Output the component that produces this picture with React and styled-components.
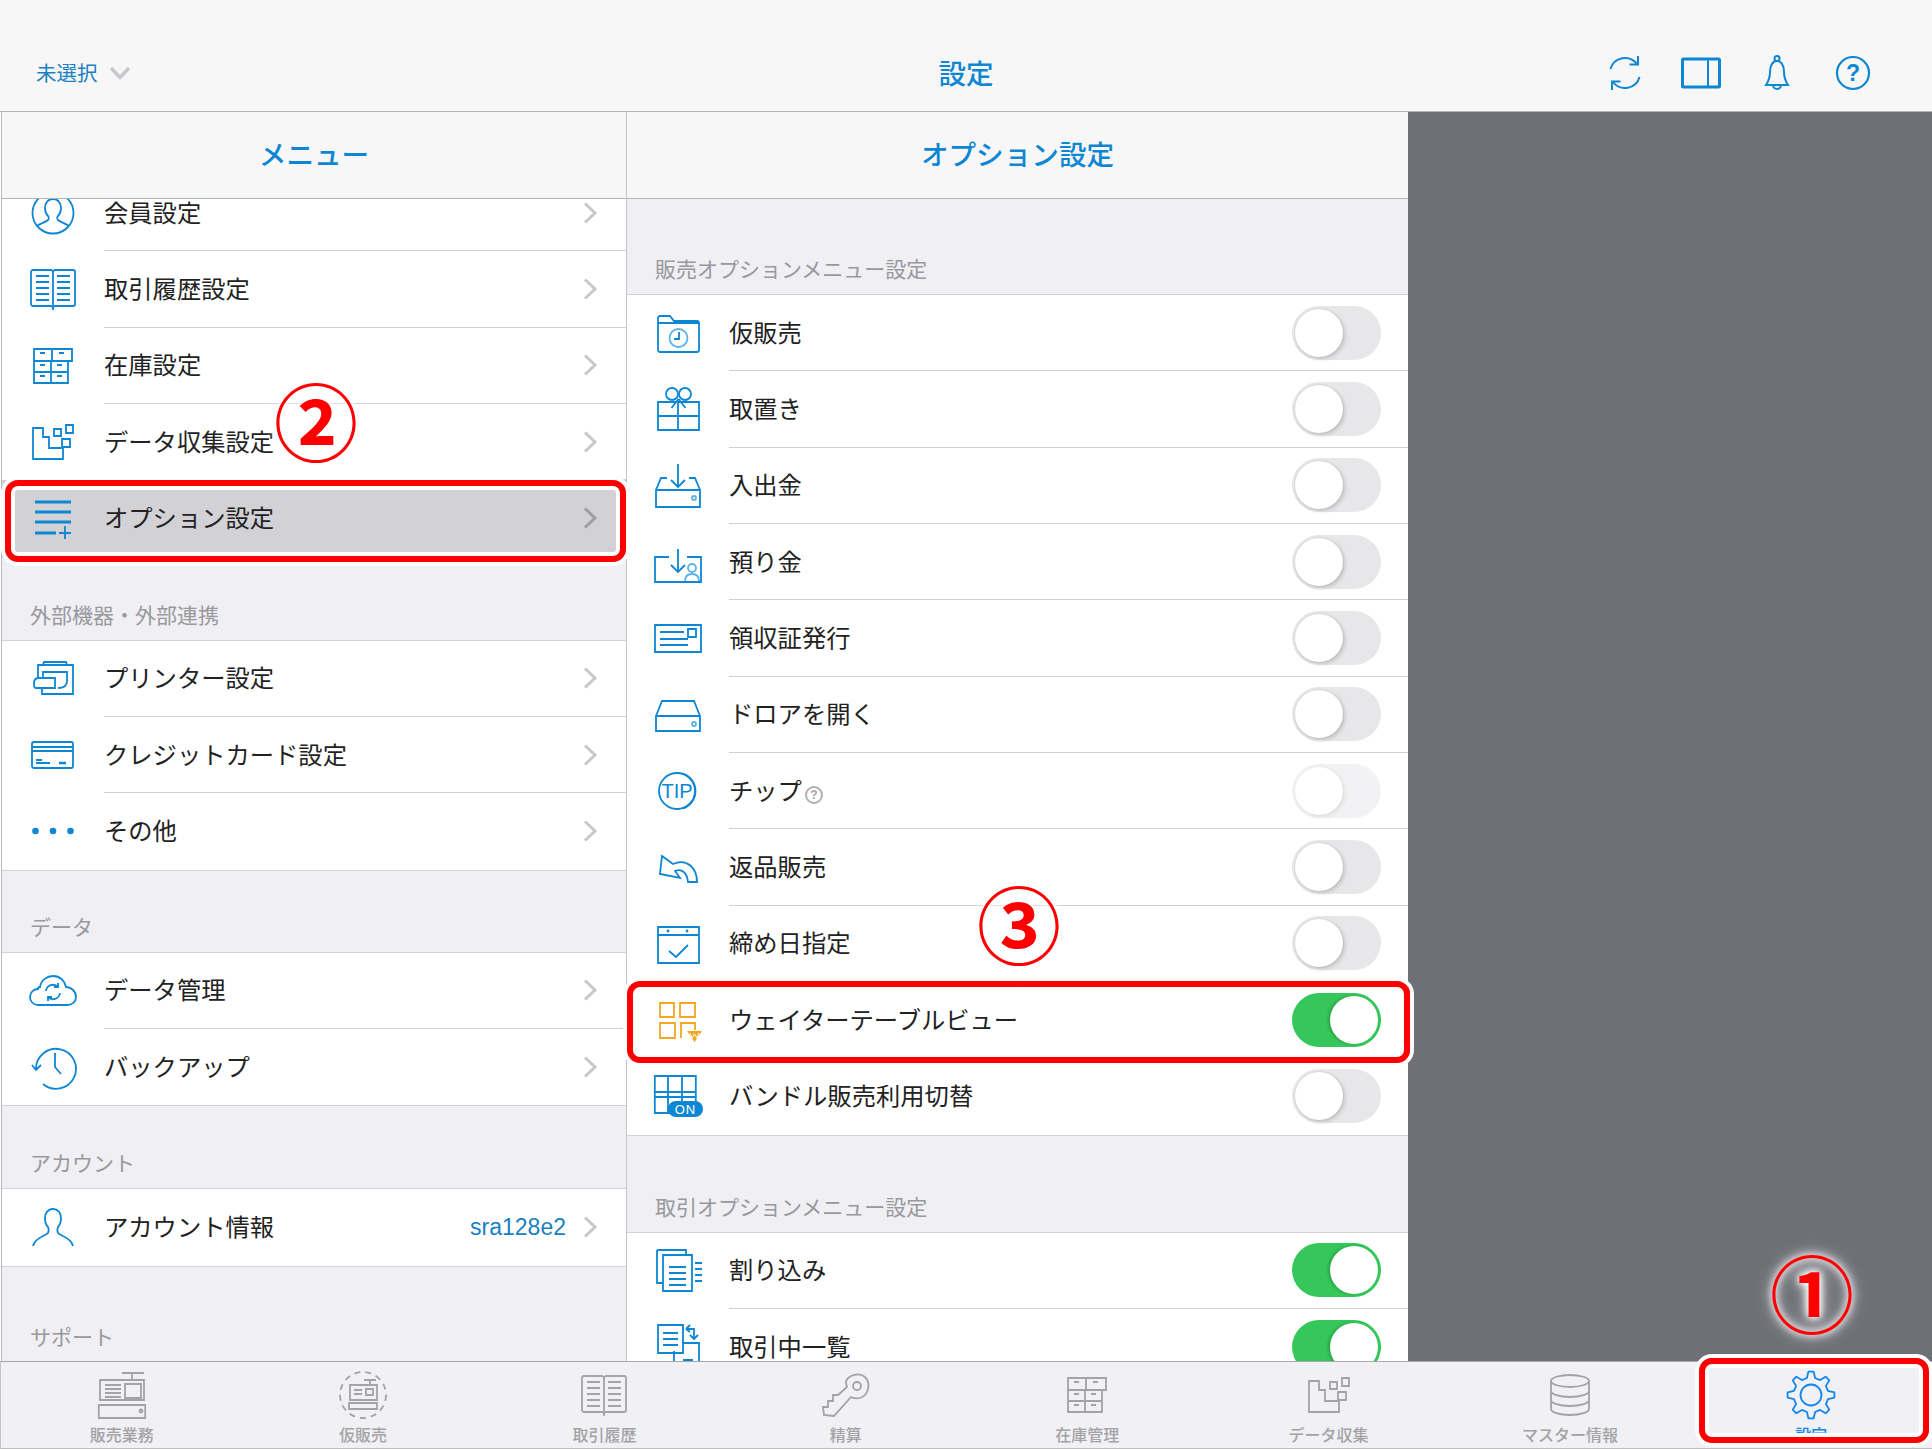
import React from 'react'
import styled, { createGlobalStyle } from 'styled-components'

const BLUE = '#0d86d3'
const JP = `"Noto Sans CJK JP", "Noto Sans", sans-serif`

const GlobalStyle = createGlobalStyle`
  html, body { margin: 0; padding: 0; background: #fff; }
  body { font-family: ${JP}; }
  * { box-sizing: border-box; }
`

const Page = styled.div`
  position: relative;
  width: 1932px;
  height: 1449px;
  overflow: hidden;
  display: grid;
  grid-template-rows: 112px 1fr 88px;
  background: #fff;
`

const TopBar = styled.header`
  display: grid;
  grid-template-columns: 1fr auto 1fr;
  align-items: center;
  padding: 34px 36px 0 36px;
  background: #f7f7f7;
  border-bottom: 1px solid #b4b4b4;
`

const ShopPicker = styled.div`
  display: flex;
  align-items: center;
  gap: 11px;
  color: #1a80c4;
  font-size: 20.5px;
  line-height: 1.2;
`

const BarTitle = styled.h1`
  margin: 0;
  color: ${BLUE};
  font-size: 27.5px;
  font-weight: 500;
  line-height: 1.2;
`

const BarActions = styled.div`
  display: flex;
  justify-content: flex-end;
  margin-right: 5px;
`

const BarAction = styled.span`
  width: 76px;
  height: 48px;
  display: flex;
  align-items: center;
  justify-content: center;
  color: ${BLUE};
`

const Split = styled.main`
  display: grid;
  grid-template-columns: 626px 781px 1fr;
  padding-left: 1px;
  min-height: 0;
  background: #fff;
`

const Pane = styled.section`
  display: flex;
  flex-direction: column;
  min-height: 0;
  background: #efeff4;
  border-left: ${p => (p.$bordered ? '1px solid #b9b9b9' : 'none')};
  border-right: ${p => (p.$bordered ? '1px solid #c4c4c4' : 'none')};
`

const EmptyDetail = styled.div`
  background: #6f6f78;
`

const PaneHeader = styled.div`
  flex: 0 0 87px;
  display: flex;
  align-items: center;
  justify-content: center;
  padding-bottom: 4px;
  background: #f7f7f7;
  border-bottom: 1px solid #b4b4b4;
  color: ${BLUE};
  font-size: 27.6px;
  font-weight: 500;
`

const Scroller = styled.div`
  flex: 1;
  min-height: 0;
  overflow: hidden;
`

const ScrollContent = styled.div`
  margin-top: ${p => p.$offset || 0}px;
`

const SectionHead = styled.div`
  height: ${p => p.$height}px;
  display: flex;
  align-items: flex-end;
  padding: 0 0 13px 28px;
  color: #98989d;
  font-size: 21px;
  line-height: 26px;
`

const List = styled.div`
  background: #fff;
  border-top: ${p => (p.$flush ? 'none' : '1px solid #d2d2d6')};
  border-bottom: 1px solid #d2d2d6;
`

const RowBody = styled.div`
  flex: 1;
  height: 100%;
  min-width: 0;
  display: flex;
  align-items: center;
  border-bottom: 1px solid #d0d0d4;
  padding-right: ${p => (p.$toggle ? 27 : 29)}px;
  color: #222;
  font-size: 24.3px;
  line-height: 1.2;
`

const Row = styled.div`
  height: 76.33px;
  display: flex;
  align-items: center;
  background: ${p => (p.$selected ? '#d1d1d6' : 'transparent')};
  &:last-child ${RowBody} {
    border-bottom: none;
  }
`

const IconSlot = styled.span`
  flex: 0 0 102px;
  height: 48px;
  display: flex;
  justify-content: center;
  color: ${p => p.$color || BLUE};
`

const Label = styled.span`
  flex: 1;
  display: flex;
  align-items: center;
  padding-bottom: 3px;
`

const HelpDot = styled.span`
  width: 18px;
  height: 18px;
  margin: 12px 0 0 3px;
  display: inline-flex;
  align-items: center;
  justify-content: center;
  border: 2px solid #b0b0b0;
  border-radius: 50%;
  color: #a4a4a4;
  font: 700 12px "Liberation Sans", sans-serif;
`

const Value = styled.span`
  margin-right: 17px;
  color: #1a7fc1;
  font: 23px "Liberation Sans", sans-serif;
`

const Track = styled.span`
  width: 89px;
  height: 54px;
  padding: 3px;
  display: flex;
  justify-content: ${p => (p.$on ? 'flex-end' : 'flex-start')};
  border-radius: 27px;
  background: ${p => (p.$on ? '#35c759' : '#e7e7ea')};
  opacity: ${p => (p.$disabled ? 0.5 : 1)};
`

const Knob = styled.span`
  width: 48px;
  height: 48px;
  border-radius: 50%;
  background: #fff;
  box-shadow: ${p =>
    p.$on ? '-2px 0 3px rgba(0,60,20,.25)' : '2px 2px 4px rgba(0,0,0,.16), 0 0 0 1px rgba(0,0,0,.05)'};
`

const TabBar = styled.nav`
  display: grid;
  grid-template-columns: repeat(8, 1fr);
  background: #f0f0f5;
  border-top: 1px solid #a9a9a9;
  border-bottom: 1px solid #bdbdbd;
  border-left: 1px solid #c4c4c4;
`

const Tab = styled.div`
  display: flex;
  flex-direction: column;
  align-items: center;
  padding-top: 9px;
  color: ${p => (p.$active ? '#1384f0' : '#a3a3a5')};
  font-size: 16px;
  font-weight: 500;
  line-height: 20px;
`

const TabLabel = styled.span`
  margin-top: 5px;
`

const Callout = styled.div`
  position: absolute;
  left: ${p => p.$x}px;
  top: ${p => p.$y}px;
  width: ${p => p.$w}px;
  height: ${p => p.$h}px;
  border: 6px solid #ff0000;
  border-radius: 13px;
  box-shadow: 0 0 0 4px #fff, inset 0 0 0 4px #fff;
`

const StepNumber = styled.span`
  position: absolute;
  left: ${p => p.$x - 50}px;
  top: ${p => p.$y - 50}px;
  width: 100px;
  height: 100px;
  display: flex;
  align-items: center;
  justify-content: center;
  color: #ff0000;
  font-size: 84px;
  font-weight: 700;
  line-height: 1;
  text-shadow: 0 0 6px #fff, 0 0 10px #fff, 0 0 16px #fff;
`

const Svg = styled.svg`
  display: block;
  flex: none;
  overflow: ${p => (p.$clip ? 'hidden' : 'visible')};
`

const lines = (x, w, ys) => ys.map(y => `M${x} ${y}h${w}`).join('')

function gearPath() {
  const teeth = 8
  const pts = []
  for (let i = 0; i < teeth; i++) {
    const a = (i / teeth) * Math.PI * 2 - Math.PI / 2
    const step = (Math.PI * 2) / teeth
    const add = (r, d) => pts.push([24 + r * Math.cos(a + d * step), 24 + r * Math.sin(a + d * step)])
    add(17.5, -0.3)
    add(23.5, -0.14)
    add(23.5, 0.14)
    add(17.5, 0.3)
  }
  return 'M' + pts.map(p => p[0].toFixed(1) + ' ' + p[1].toFixed(1)).join('L') + 'Z'
}

const bookShape = (
  <>
    <path d="M4 5h18l2 1 2-1h18a2 2 0 012 2v32a2 2 0 01-2 2H26l-2 1-2-1H4a2 2 0 01-2-2V7a2 2 0 012-2z" />
    <path d="M24 6v39" />
    <path d={lines(7, 13, [11, 17, 23, 29, 35]) + lines(28, 13, [11, 17, 23, 29, 35])} />
  </>
)
const drawerShape = (
  <>
    <path d="M5 7h18v12H5zM23 7h20v12H23zM5 19h34v11H5zM22 19v22M5 30h34v11H5z" />
    <path d="M11 11h5M30 11h5M11 23h5M28 23h5M11 34h5M28 34h5" />
  </>
)
const stairShape = (
  <>
    <path d="M4 10h10v9h6v11h14v11H4z" />
    <path d="M25 11h7v7h-7zM37 7h7v8h-7zM33 21h8v8h-8z" />
  </>
)

const ICONS = {
  member: (
    <>
      <circle cx="24" cy="24" r="20.5" />
      <path d="M24 10c-5 0-8 4-8 9 0 3 1 6 3 8 1 1 1 3 0 4-2 2-7 3-11 6M24 10c5 0 8 4 8 9 0 3-1 6-3 8-1 1-1 3 0 4 2 2 7 3 11 6" />
    </>
  ),
  book: bookShape,
  drawers: drawerShape,
  stairs: stairShape,
  options: (
    <>
      <path strokeWidth="3" d={lines(6, 36, [8, 18, 28]) + 'M6 39h21'} />
      <path d="M36 32v13M30 39h12" />
    </>
  ),
  printer: (
    <>
      <path d="M14 10l1-3h22l1 3M9 23V10h35v29H13v-6" />
      <path d="M14 23v-6h24v9c0 5-4 7-9 7" />
      <path d="M5 28c0-3 2-5 5-5h16v10H7c-1 0-2-1-2-2z" />
    </>
  ),
  card: (
    <>
      <rect x="3" y="11" width="41" height="26" rx="2" />
      <path d="M3 16h41M3 20h41M7 29h6M7 32h14" />
      <path strokeWidth="2.5" d="M30 32h7" />
    </>
  ),
  dots: (
    <g fill="currentColor" stroke="none">
      <circle cx="6.5" cy="24" r="3.3" />
      <circle cx="24" cy="24" r="3.3" />
      <circle cx="41.5" cy="24" r="3.3" />
    </g>
  ),
  cloud: (
    <>
      <path d="M9 38c-5 0-8-4-8-8 0-5 4-8 8-8 0-1 1-2 2-2 1-7 7-11 13-11 7 0 12 5 13 11 5 0 10 4 10 10 0 5-4 8-9 8z" />
      <path d="M17 24a7 7 0 0112-4M31 26a7 7 0 01-12 4M29 16v4h-4M19 34v-4h4" />
    </>
  ),
  backup: (
    <>
      <path d="M7 26A20 20 0 1 1 14 41" />
      <path d="M3 22l4 5 5-5M26 10v14l6 7" />
    </>
  ),
  user: <path d="M24 6c-5 0-8 4-8 9 0 4 1 7 3 9 1 2 1 4 0 6-2 3-13 4-15 13M24 6c5 0 8 4 8 9 0 4-1 7-3 9-1 2-1 4 0 6 2 3 13 4 15 13" />,
  folderClock: (
    <>
      <path d="M6 7h10l4 5h23a2 2 0 012 2v27a2 2 0 01-2 2H6a2 2 0 01-2-2V9a2 2 0 012-2zM4 14h41" />
      <circle cx="24.5" cy="29" r="9" stroke="#5cb2e6" />
      <path d="M25 23v7h-5" />
    </>
  ),
  gift: (
    <>
      <path d="M4 17h41v28H4zM24 17v28M4 31h41" />
      <circle cx="18" cy="9" r="6" />
      <circle cx="31" cy="9" r="6" />
      <path d="M24.5 14l-7 9M24.5 14l7 9" />
    </>
  ),
  inbox: (
    <>
      <path d="M2 28h44v17H2zM2 28l5-12h6M46 28l-5-12h-6M24 2v22M17 18l7 7 7-7" />
      <circle cx="40" cy="36" r="2" stroke="#5cb2e6" />
    </>
  ),
  deposit: (
    <>
      <path d="M15 19H1v25h46V19H33M24 11v22M17 27l7 7 7-7" />
      <g stroke="#5cb2e6">
        <circle cx="38" cy="30" r="4" />
        <path d="M31 43c0-5 3-7 7-7s7 2 7 7" />
      </g>
    </>
  ),
  receipt: (
    <>
      <path d="M1 11h46v27H1z" />
      <path d="M6 18h24M6 25h28M6 31h28M34 15h8v8h-8z" />
    </>
  ),
  drawer: (
    <>
      <path d="M2 25l6-15h32l6 15M2 25h44v15H2z" />
      <circle cx="40" cy="33" r="2" stroke="#5cb2e6" />
    </>
  ),
  tip: (
    <>
      <circle cx="23" cy="24" r="18" />
      <path d="M29 6.500A18.500 18.500 0 0 1 29 41.500" />
      <text x="23" y="31" textAnchor="middle" fontFamily="Liberation Sans, sans-serif" fontSize="20" fill="currentColor" stroke="none">TIP</text>
    </>
  ),
  returnSale: <path d="M8 13L6 31l20 4-5-7c7-3 12 2 13 11h9C43 25 33 15 19 21z" />,
  calendar: (
    <>
      <path d="M4 7h41v36H4zM4 15h41M15 31l7 6 12-12" />
      <g fill="currentColor" stroke="none">
        <circle cx="14" cy="11" r="1.400" />
        <circle cx="33" cy="11" r="1.400" />
      </g>
    </>
  ),
  waiter: (
    <>
      <path d="M6 7h14v14H6zM26 7h15v14H26zM6 27h15v15H6zM27 42V27h14v7" />
      <path fill="currentColor" stroke="none" d="M33 35h15l-7.500 11z" />
      <path stroke="#fff" strokeWidth="1" d="M36 37l2 5 2.500-4 2.500 4 2-5" />
    </>
  ),
  bundle: (
    <>
      <path d="M0.800 4h41v37H0.800zM14 4v37M28 4v26M1 20h41M1 25h41" />
      <rect x="14" y="29" width="35" height="16" rx="8" fill="currentColor" stroke="none" />
      <text x="31.500" y="42" textAnchor="middle" fontFamily="Liberation Sans, sans-serif" fontSize="13" letterSpacing="1" fill="#fff" stroke="none">ON</text>
    </>
  ),
  docs: (
    <>
      <path d="M3 3h29v5M3 3v33h6" />
      <path d="M9 8h29v36H9z" />
      <path d={lines(15, 17, [20, 26, 32, 38]) + lines(41, 7, [16, 22, 28, 34])} />
    </>
  ),
  transactions: (
    <>
      <path d="M4 2h25v28H4zM9 10h15M9 16h15M9 22h15" />
      <path d="M20 30v-2M29 20h16v28M20 30v18M29 37h10M29 43h10" />
      <path d="M32 6l4-4M32 6l4 3M32 6h8v9M36 12l4 4 4-4" />
    </>
  ),
  register: (
    <>
      <path d="M24 2h22M34 2v7M2 9h44v20H2zM27 13h16v14H27z" />
      <path d={lines(7, 16, [14, 18, 22, 26])} />
      <path d="M0.800 34h46.400v13H0.800z" />
      <circle cx="43" cy="40" r="1.500" />
    </>
  ),
  tempRegister: (
    <>
      <circle cx="24" cy="24" r="23" strokeDasharray="6 5" />
      <path d="M25 9h12M31 9v5M11 14h27v15H11zM27 18h7v6h-7zM15 19h8M15 23h8M10 32h28v6H10z" />
    </>
  ),
  key: (
    <>
      <path d="M24 10C27 4 37 1 43 6c6 6 4 18-5 21-4 1-7 0-9-1L12 45 2 44l-1-8h5v-6h5v-6h5l9-8c-1-2-1-4-1-6z" />
      <circle cx="35" cy="15" r="4" />
    </>
  ),
  database: (
    <>
      <ellipse cx="24" cy="10" rx="19" ry="6" />
      <path d="M5 10v28c0 3 8 6 19 6s19-3 19-6V10M5 20c0 3 8 6 19 6s19-3 19-6M5 29c0 3 8 6 19 6s19-3 19-6" />
    </>
  ),
  gear: (
    <>
      <path strokeLinejoin="round" d={gearPath()} />
      <circle cx="24" cy="24" r="10.500" />
    </>
  ),
  refresh: (
    <>
      <path strokeWidth="2" d="M9.500 20A15 15 0 0 1 36 15M38.500 28A15 15 0 0 1 12 33" />
      <path strokeWidth="2" d="M37 7v8.500h-8.500M11 41v-8.500h8.500" />
    </>
  ),
  panel: (
    <>
      <rect x="5.500" y="10" width="37" height="28" rx="1" strokeWidth="3" />
      <path strokeWidth="2" d="M31 10v28" />
    </>
  ),
  bell: (
    <>
      <path strokeWidth="2" d="M13 36c2-3 4-7 4-13 0-7 3-11 7-11s7 4 7 11c0 6 2 10 4 13zM20 36a4 4 0 008 0" />
      <circle cx="24" cy="9.500" r="2.500" strokeWidth="2" />
    </>
  ),
  help: (
    <>
      <circle cx="24" cy="24" r="16" strokeWidth="2.200" />
      <text x="24" y="32" textAnchor="middle" fontFamily="Liberation Sans, sans-serif" fontWeight="700" fontSize="23" fill="currentColor" stroke="none">?</text>
    </>
  ),
}

function Icon({ name, width = 1.8 }) {
  return (
    <Svg width="48" height="48" viewBox="0 0 48 48" fill="none" stroke="currentColor" strokeWidth={width}>
      {ICONS[name]}
    </Svg>
  )
}

function Chevron({ dark }) {
  return (
    <Svg width="14" height="22" viewBox="0 0 14 22" fill="none" stroke={dark ? '#9d9da2' : '#c7c7cc'} strokeWidth="3">
      <path d="M2 1.500L12 11 2 20.500" />
    </Svg>
  )
}

function Toggle({ on, disabled }) {
  return (
    <Track $on={on} $disabled={disabled}>
      <Knob $on={on} />
    </Track>
  )
}

function MenuRow({ icon, label, value, selected }) {
  return (
    <Row $selected={selected}>
      <IconSlot>
        <Icon name={icon} />
      </IconSlot>
      <RowBody>
        <Label>{label}</Label>
        {value && <Value>{value}</Value>}
        <Chevron dark={selected} />
      </RowBody>
    </Row>
  )
}

function OptionRow({ icon, label, on, disabled, help, color }) {
  return (
    <Row>
      <IconSlot $color={color}>
        <Icon name={icon} />
      </IconSlot>
      <RowBody $toggle>
        <Label>
          {label}
          {help && <HelpDot>?</HelpDot>}
        </Label>
        <Toggle on={on} disabled={disabled} />
      </RowBody>
    </Row>
  )
}

const TABS = [
  ['register', '販売業務'],
  ['tempRegister', '仮販売'],
  ['book', '取引履歴'],
  ['key', '精算'],
  ['drawers', '在庫管理'],
  ['stairs', 'データ収集'],
  ['database', 'マスター情報'],
  ['gear', '設定'],
]

export default function App() {
  return (
    <Page>
      <GlobalStyle />
      <TopBar>
        <ShopPicker>
          未選択
          <Svg width="22" height="14" viewBox="0 0 22 14" fill="none" stroke="#c7c7cc" strokeWidth="3.500">
            <path d="M2 2l9 9.500L20 2" />
          </Svg>
        </ShopPicker>
        <BarTitle>設定</BarTitle>
        <BarActions>
          {['refresh', 'panel', 'bell', 'help'].map(n => (
            <BarAction key={n}>
              <Icon name={n} />
            </BarAction>
          ))}
        </BarActions>
      </TopBar>

      <Split>
        <Pane $bordered>
          <PaneHeader>メニュー</PaneHeader>
          <Scroller>
            <ScrollContent $offset={-24}>
              <List $flush>
                <MenuRow icon="member" label="会員設定" />
                <MenuRow icon="book" label="取引履歴設定" />
                <MenuRow icon="drawers" label="在庫設定" />
                <MenuRow icon="stairs" label="データ収集設定" />
                <MenuRow icon="options" label="オプション設定" selected />
              </List>
              <SectionHead $height={82}>外部機器・外部連携</SectionHead>
              <List>
                <MenuRow icon="printer" label="プリンター設定" />
                <MenuRow icon="card" label="クレジットカード設定" />
                <MenuRow icon="dots" label="その他" />
              </List>
              <SectionHead $height={81}>データ</SectionHead>
              <List>
                <MenuRow icon="cloud" label="データ管理" />
                <MenuRow icon="backup" label="バックアップ" />
              </List>
              <SectionHead $height={82}>アカウント</SectionHead>
              <List>
                <MenuRow icon="user" label="アカウント情報" value="sra128e2" />
              </List>
              <SectionHead $height={95}>サポート</SectionHead>
            </ScrollContent>
          </Scroller>
        </Pane>

        <Pane>
          <PaneHeader>オプション設定</PaneHeader>
          <Scroller>
            <ScrollContent>
              <SectionHead $height={95}>販売オプションメニュー設定</SectionHead>
              <List>
                <OptionRow icon="folderClock" label="仮販売" />
                <OptionRow icon="gift" label="取置き" />
                <OptionRow icon="inbox" label="入出金" />
                <OptionRow icon="deposit" label="預り金" />
                <OptionRow icon="receipt" label="領収証発行" />
                <OptionRow icon="drawer" label="ドロアを開く" />
                <OptionRow icon="tip" label="チップ" help disabled />
                <OptionRow icon="returnSale" label="返品販売" />
                <OptionRow icon="calendar" label="締め日指定" />
                <OptionRow icon="waiter" label="ウェイターテーブルビュー" color="#f5a623" on />
                <OptionRow icon="bundle" label="バンドル販売利用切替" />
              </List>
              <SectionHead $height={96}>取引オプションメニュー設定</SectionHead>
              <List>
                <OptionRow icon="docs" label="割り込み" on />
                <OptionRow icon="transactions" label="取引中一覧" on />
              </List>
            </ScrollContent>
          </Scroller>
        </Pane>

        <EmptyDetail />
      </Split>

      <TabBar>
        {TABS.map(([icon, label]) => (
          <Tab key={label} $active={icon === 'gear'}>
            <Icon name={icon} />
            <TabLabel>{label}</TabLabel>
          </Tab>
        ))}
      </TabBar>

      <Callout $x={5} $y={480} $w={621} $h={82} />
      <Callout $x={627} $y={981} $w={783} $h={82} />
      <Callout $x={1699} $y={1358} $w={230} $h={85} />
      <StepNumber $x={1812} $y={1291}>①</StepNumber>
      <StepNumber $x={316} $y={419}>②</StepNumber>
      <StepNumber $x={1019} $y={922}>③</StepNumber>
    </Page>
  )
}
